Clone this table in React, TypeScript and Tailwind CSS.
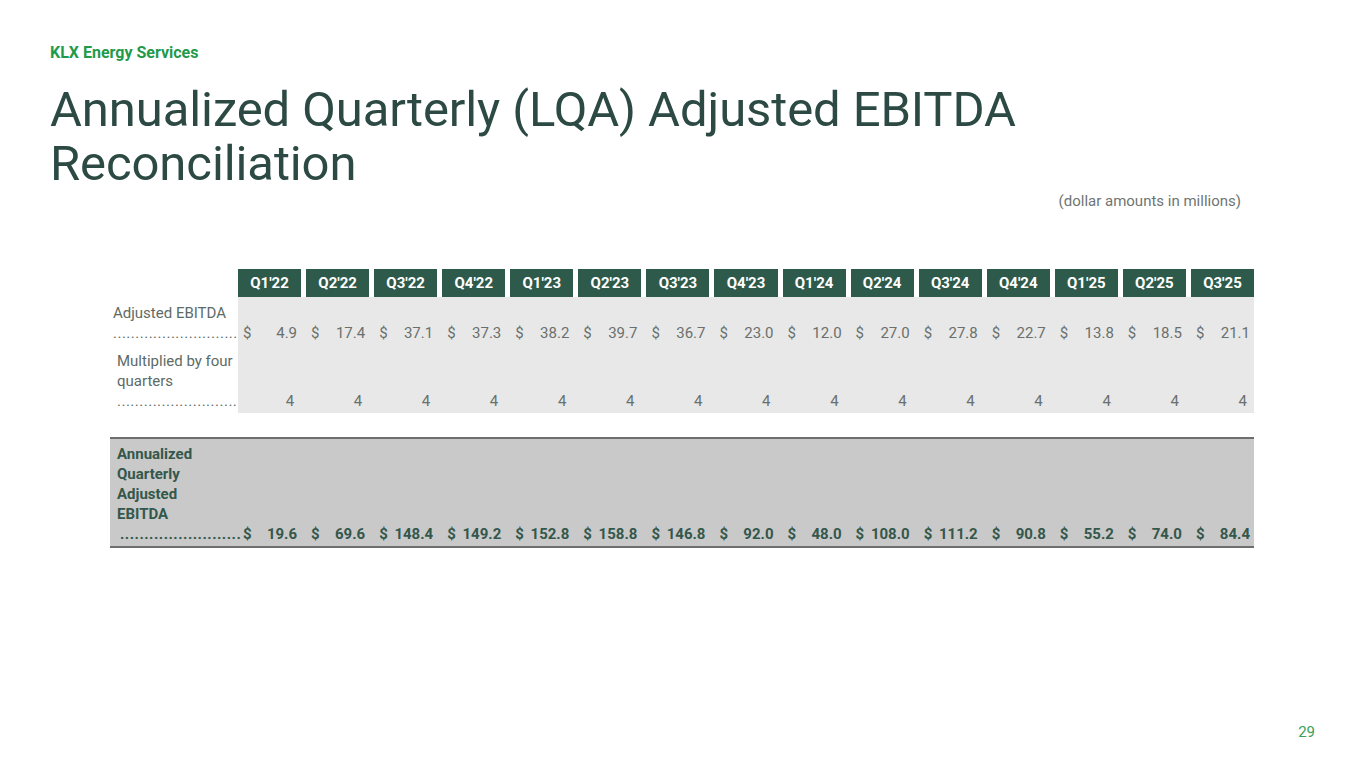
import React from "react";

const quarters = [
  "Q1'22", "Q2'22", "Q3'22", "Q4'22",
  "Q1'23", "Q2'23", "Q3'23", "Q4'23",
  "Q1'24", "Q2'24", "Q3'24", "Q4'24",
  "Q1'25", "Q2'25", "Q3'25",
];

const ebitda = ["4.9", "17.4", "37.1", "37.3", "38.2", "39.7", "36.7", "23.0", "12.0", "27.0", "27.8", "22.7", "13.8", "18.5", "21.1"];
const annualized = ["19.6", "69.6", "148.4", "149.2", "152.8", "158.8", "146.8", "92.0", "48.0", "108.0", "111.2", "90.8", "55.2", "74.0", "84.4"];

function Dots({ n }: { n: number }) {
  return <div className="h-5 whitespace-nowrap leading-5 tracking-[0.5px]">{".".repeat(n)}</div>;
}

function Money({ v }: { v: string }) {
  return (
    <div className="flex h-5 items-center justify-between pl-[5px] pr-[4px]">
      <span>$</span>
      <span>{v}</span>
    </div>
  );
}

export default function App() {
  return (
    <div
      className="relative h-[768px] w-[1365px] overflow-hidden bg-white"
      style={{ fontFamily: "Roboto, 'Liberation Sans', sans-serif" }}
    >
      <div className="px-[50px] pt-[42px]">
        <div className="text-[16px] font-bold leading-[22px] text-[#1f9a4a]">KLX Energy Services</div>
        <h1 className="mt-[19px] text-[49px] leading-[54px] tracking-[-0.1px] text-[#2c4a43]">
          Annualized Quarterly (LQA) Adjusted EBITDA
          <br />
          Reconciliation
        </h1>
        <div className="flex justify-end pr-[74px] text-[15px] leading-[20px] text-[#6f7573]">
          (dollar amounts in millions)
        </div>
      </div>

      <div className="ml-[110px] mt-[58px] w-[1144px] text-[15px]">
        {/* header */}
        <div className="flex">
          <div className="w-[128px] shrink-0" />
          <div className="grid flex-1 grid-cols-15 gap-x-[5px]">
            {quarters.map((q) => (
              <div key={q} className="flex h-[28px] items-center justify-center bg-[#2e5a4b] font-bold text-white">
                {q}
              </div>
            ))}
          </div>
        </div>

        {/* adjusted ebitda + multiplier */}
        <div className="text-[#6a706d]">
          <div className="flex">
            <div className="w-[128px] shrink-0 pb-[8px] pl-[3px] pt-[6px] text-[#5d6b66]">
              <div className="h-5 leading-5">Adjusted EBITDA</div>
              <Dots n={28} />
            </div>
            <div className="grid flex-1 grid-cols-15 items-end gap-x-[5px] bg-[#e8e8e8] pb-[8px]">
              {ebitda.map((v, i) => (
                <Money key={i} v={v} />
              ))}
            </div>
          </div>
          <div className="flex">
            <div className="w-[128px] shrink-0 pb-[2px] pl-[7px] text-[#5d6b66]">
              <div className="leading-5">Multiplied by four quarters</div>
              <Dots n={27} />
            </div>
            <div className="grid flex-1 grid-cols-15 items-end gap-x-[5px] bg-[#e8e8e8] pb-[2px]">
              {quarters.map((q) => (
                <div key={q} className="h-5 pr-[7px] text-right leading-5">4</div>
              ))}
            </div>
          </div>
        </div>

        {/* annualized */}
        <div className="mt-[24px] flex border-y-2 border-[#6e6e6e] bg-[#c9c9c9] pb-[2px] pt-[5px] font-bold text-[#34574b]">
          <div className="w-[128px] shrink-0 pl-[7px]">
            <div className="w-[100px] leading-5">Annualized Quarterly Adjusted EBITDA</div>
            <div className="pl-[3px]">
              <Dots n={25} />
            </div>
          </div>
          <div className="grid flex-1 grid-cols-15 items-end gap-x-[5px]">
            {annualized.map((v, i) => (
              <Money key={i} v={v} />
            ))}
          </div>
        </div>
      </div>

      <div className="absolute bottom-[25px] right-[50px] text-[15px] text-[#3aa05a]">29</div>
    </div>
  );
}
